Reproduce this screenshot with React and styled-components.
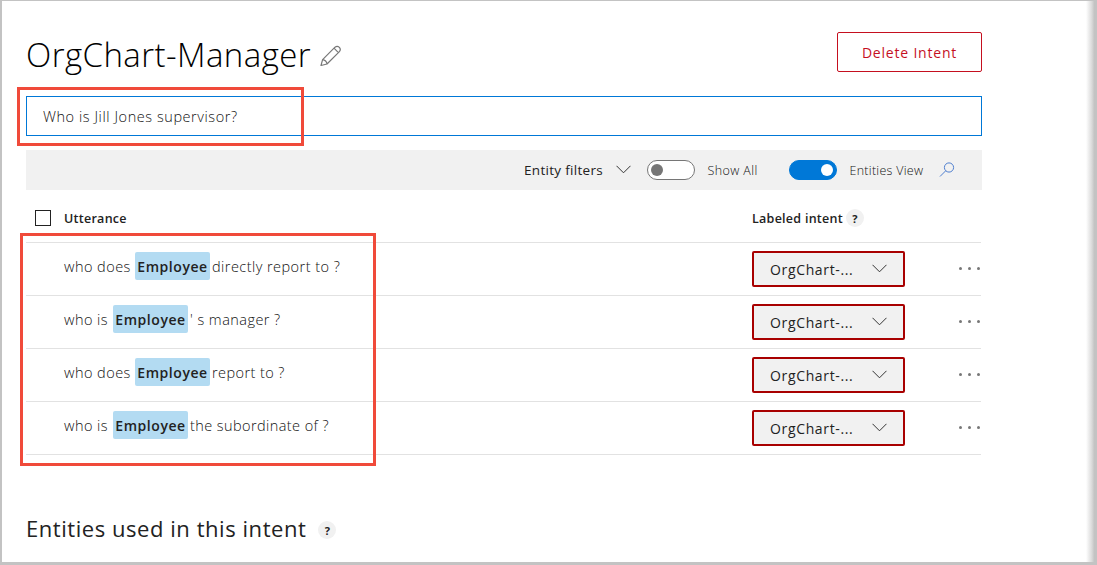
import React from "react";
import styled, { createGlobalStyle } from "styled-components";

const Global = createGlobalStyle`
  * { box-sizing: border-box; }
  body { margin: 0; background: #fff; font-family: "Open Sans", "Noto Sans", sans-serif; color: #222; }
  button, input { font-family: inherit; }
`;

const Frame = styled.div`
  position: relative;
  width: 1097px;
  height: 565px;
  overflow: hidden;
  padding: 31px 0 0 24px;
  background: #fff;
  border: solid #c3c3c3;
  border-width: 1px 0 3px 2px;
`;

const EdgeShadow = styled.div`
  position: absolute;
  top: 0;
  right: 0;
  bottom: 0;
  width: 11px;
  background: linear-gradient(to right, rgba(195, 195, 195, 0), #d8d8d8 55%, #c3c3c3 75%);
`;

const Page = styled.main`
  width: 956px;
`;

const Header = styled.header`
  display: flex;
  align-items: flex-start;
  height: 64px;
`;

const Title = styled.h1`
  margin: 0;
  font-size: 33px;
  line-height: 46px;
  font-weight: 300;
  letter-spacing: 0.43px;
  white-space: nowrap;
  color: #000;
`;

const PencilIcon = styled.svg`
  margin: 13px 0 0 9px;
  flex: none;
`;

const DeleteButton = styled.button`
  width: 145px;
  height: 40px;
  margin-left: auto;
  padding: 0;
  border: 1px solid #c50f1f;
  border-radius: 2px;
  background: #fff;
  color: #c50f1f;
  font-size: 14px;
  letter-spacing: 0.8px;
`;

const UtteranceInput = styled.input`
  display: block;
  width: 956px;
  height: 40px;
  padding: 1px 16px 0;
  border: 1px solid #0078d7;
  border-radius: 0;
  outline: none;
  background: #fff;
  color: #111;
  font-size: 14.5px;
  font-weight: 300;
  letter-spacing: 0.56px;
`;

const Toolbar = styled.div`
  display: flex;
  align-items: center;
  height: 40px;
  margin-top: 14px;
  padding-left: 498px;
  background: #f1f1f1;
`;

const FilterLabel = styled.span`
  width: 92px;
  font-size: 13.5px;
  letter-spacing: 0.3px;
  white-space: nowrap;
`;

const Chevron = styled.svg`
  flex: none;
  width: 15px;
  height: 9px;
  margin-top: -2px;
  fill: none;
  stroke: #333;
  stroke-width: 1;
`;

const Toggle = styled.span`
  display: flex;
  align-items: center;
  justify-content: ${(p) => (p.$on ? "flex-end" : "flex-start")};
  flex: none;
  width: 48px;
  height: 20px;
  margin-left: ${(p) => p.$gap}px;
  padding: 0 3px;
  border: 1px solid ${(p) => (p.$on ? "#0078d7" : "#767676")};
  border-radius: 10px;
  background: ${(p) => (p.$on ? "#0078d7" : "#fff")};

  &::after {
    content: "";
    width: 12px;
    height: 12px;
    border-radius: 50%;
    background: ${(p) => (p.$on ? "#fff" : "#767676")};
  }
`;

const ToggleLabel = styled.span`
  width: ${(p) => p.$width}px;
  margin-left: 12.5px;
  font-size: 12.5px;
  font-weight: 300;
  color: #111;
  letter-spacing: ${(p) => p.$spacing}px;
  white-space: nowrap;
`;

const ColumnHeads = styled.div`
  display: grid;
  grid-template-columns: 38px 688px 1fr;
  align-items: center;
  width: 955px;
  height: 53px;
  padding-top: 4px;
  border-bottom: 1px solid #e2e2e2;
  font-size: 12.5px;
  font-weight: 600;
  letter-spacing: 0.27px;
`;

const Checkbox = styled.span`
  width: 16px;
  height: 16px;
  margin-left: 9px;
  border: 1px solid #222;
`;

const HeadWithHelp = styled.span`
  display: flex;
  align-items: center;
`;

const Help = styled.span`
  display: flex;
  align-items: center;
  justify-content: center;
  width: 18px;
  height: 18px;
  margin-left: ${(p) => p.$gap}px;
  border-radius: 50%;
  background: #f1f1f1;
  color: #222;
  font-size: 11px;
  font-weight: 700;
  letter-spacing: 0;
`;

const Row = styled.div`
  display: grid;
  grid-template-columns: 688px 153px 1fr;
  width: 955px;
  height: 53px;
  padding-left: 38px;
  border-bottom: 1px solid #e2e2e2;
`;

const Utterance = styled.div`
  display: flex;
  height: 28px;
  margin-top: 9px;
  color: #111;
  font-size: 14.5px;
  font-weight: 300;
  line-height: 30px;
  letter-spacing: 0.45px;
  white-space: nowrap;
`;

const Lead = styled.span`
  width: ${(p) => p.$width}px;
`;

const Rest = styled.span`
  margin-left: 2px;
  letter-spacing: ${(p) => p.$spacing}px;
`;

const Entity = styled.span`
  width: 75px;
  border-radius: 2px;
  background: #b3dbf2;
  color: #222;
  font-size: 14px;
  font-weight: 600;
  text-align: center;
  letter-spacing: 0.55px;
`;

const IntentSelect = styled.div`
  display: flex;
  align-items: center;
  justify-content: space-between;
  width: 153px;
  height: 36px;
  margin-top: 8px;
  padding: 0 16.5px 0 16px;
  border: 2px solid #a80000;
  border-radius: 2px;
  background: #f1f1f1;
  font-size: 14px;
  letter-spacing: 0.65px;
`;

const More = styled.span`
  display: flex;
  gap: 6px;
  justify-content: flex-end;
  padding: 24px 1px 0 0;

  i {
    width: 3px;
    height: 3px;
    border-radius: 50%;
    background: #777;
  }
`;

const SectionTitle = styled.h2`
  display: flex;
  align-items: center;
  height: 34px;
  margin: 56px 0 0;
  font-size: 22px;
  font-weight: 400;
  letter-spacing: 0.55px;
  white-space: nowrap;
`;

const SectionHelp = styled(Help)`
  margin-top: 4px;
`;

const Highlight = styled.div`
  position: absolute;
  left: ${(p) => p.$x}px;
  top: ${(p) => p.$y}px;
  width: ${(p) => p.$w}px;
  height: ${(p) => p.$h}px;
  border: 3px solid #f04a3a;
`;

const ROWS = [
  { lead: "who does", leadWidth: 71, rest: "directly report to ?", spacing: 0.45 },
  { lead: "who is", leadWidth: 49, rest: "' s manager ?", spacing: 0.45 },
  { lead: "who does", leadWidth: 71, rest: "report to ?", spacing: 0.42 },
  { lead: "who is", leadWidth: 49, rest: "the subordinate of ?", spacing: 0.42 },
];

function Down() {
  return (
    <Chevron viewBox="0 0 15 9">
      <path d="M0.5 0.8 7.5 7.8 14.5 0.8" />
    </Chevron>
  );
}

export default function App() {
  return (
    <>
      <Global />
      <Frame>
        <Page>
          <Header>
            <Title>OrgChart-Manager</Title>
            <PencilIcon width="22" height="22" viewBox="0 0 22 22" fill="none" stroke="#777" strokeWidth="1.2" strokeLinejoin="round">
              <path d="M1 20.5 2.6 14.6 15 2.2Q17.2.4 19.4 2.4 21.2 4.6 19.4 6.6L7 19 1 20.5ZM2.6 14.6Q6.4 15 7 19M14 3.2 18.4 7.6" />
            </PencilIcon>
            <DeleteButton>Delete Intent</DeleteButton>
          </Header>
          <UtteranceInput defaultValue="Who is Jill Jones supervisor?" />
          <Toolbar>
            <FilterLabel>Entity filters</FilterLabel>
            <Down />
            <Toggle $gap={16} />
            <ToggleLabel $width={65.5} $spacing={0.4}>Show All</ToggleLabel>
            <Toggle $on $gap={16} />
            <ToggleLabel $width={89.5} $spacing={0.28}>Entities View</ToggleLabel>
            <svg width="16" height="16" viewBox="0 0 16 16" fill="none" stroke="#4f7fcf" strokeWidth="1">
              <circle cx="10" cy="5.5" r="4.6" />
              <path d="M6.7 8.8 1 14.5" />
            </svg>
          </Toolbar>
          <ColumnHeads>
            <Checkbox />
            <span>Utterance</span>
            <HeadWithHelp>
              Labeled intent<Help $gap={3}>?</Help>
            </HeadWithHelp>
          </ColumnHeads>
          {ROWS.map((r) => (
            <Row key={r.rest}>
              <Utterance>
                <Lead $width={r.leadWidth}>{r.lead}</Lead>
                <Entity>Employee</Entity>
                <Rest $spacing={r.spacing}>{r.rest}</Rest>
              </Utterance>
              <IntentSelect>
                OrgChart-...
                <Down />
              </IntentSelect>
              <More>
                <i />
                <i />
                <i />
              </More>
            </Row>
          ))}
          <SectionTitle>
            Entities used in this intent<SectionHelp $gap={12}>?</SectionHelp>
          </SectionTitle>
        </Page>
        <Highlight $x={15} $y={86} $w={287} $h={59} />
        <Highlight $x={18} $y={232} $w={356} $h={233} />
        <EdgeShadow />
      </Frame>
    </>
  );
}
